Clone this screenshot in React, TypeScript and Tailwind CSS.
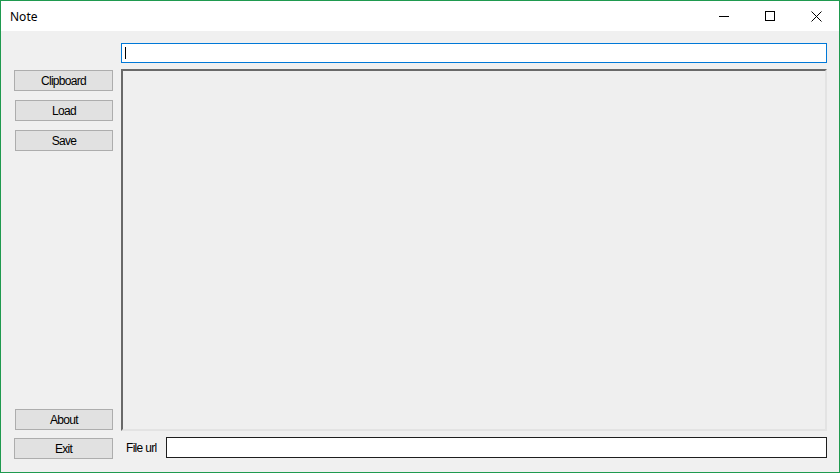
import React from 'react'

const ui = { fontFamily: '"Liberation Sans", Arial, sans-serif' }

function Btn({ label, className }: { label: string; className?: string }) {
  return (
    <button
      type="button"
      className={
        'h-[21px] bg-[#e1e1e1] border border-[#adadad] text-[12px] tracking-[-0.7px] text-black leading-none ' +
        (className ?? '')
      }
      style={ui}
    >
      {label}
    </button>
  )
}

export default function App() {
  return (
    <div className="w-[840px] h-[473px] border border-[#1f9a4f] flex flex-col bg-[#f0f0f0] overflow-hidden">
      {/* title bar */}
      <div className="h-[30px] bg-white flex items-center shrink-0">
        <span
          className="ml-[9px] mt-[1px] text-[12px] text-black"
          style={{ fontFamily: '"Noto Sans", "Open Sans", sans-serif' }}
        >
          Note
        </span>
        <div className="ml-auto flex h-full">
          <div className="w-[46px] h-full flex items-center justify-center">
            <svg width="10" height="10" viewBox="0 0 10 10">
              <path d="M0 5.5H10" stroke="#000" strokeWidth="1" />
            </svg>
          </div>
          <div className="w-[46px] h-full flex items-center justify-center">
            <svg width="10" height="10" viewBox="0 0 10 10">
              <rect x="0.5" y="0.5" width="9" height="9" fill="none" stroke="#000" strokeWidth="1" />
            </svg>
          </div>
          <div className="w-[46px] h-full flex items-center justify-center">
            <svg width="11" height="11" viewBox="0 0 11 11">
              <path d="M0.5 0.5L10.5 10.5M10.5 0.5L0.5 10.5" stroke="#000" strokeWidth="1" />
            </svg>
          </div>
        </div>
      </div>

      {/* body */}
      <div className="flex-1 flex">
        <div className="flex flex-col w-[112px] pl-[13px] pt-[39px] pb-[13px] shrink-0">
          <Btn label="Clipboard" className="w-[99px]" />
          <Btn label="Load" className="w-[98px] ml-px mt-[9px]" />
          <Btn label="Save" className="w-[98px] ml-px mt-[9px]" />
          <div className="flex-1" />
          <Btn label="About" className="w-[98px] ml-px" />
          <Btn label="Exit" className="w-[99px] mt-[8px]" />
        </div>

        <div className="flex-1 flex flex-col pl-[8px] pr-[12px] pt-[12px] pb-[14px]">
          <div className="h-[20px] border border-[#0078d7] bg-white flex items-center pl-[3px]">
            <div className="w-px h-[12px] bg-black" />
          </div>
          <div className="flex-1 mt-[6px] border-2 border-t-[#696969] border-l-[#696969] border-r-[#e3e3e3] border-b-[#e3e3e3] bg-[#efefef]" />
          <div className="h-[21px] mt-[6px] flex items-center">
            <span className="w-[45px] pl-[5px] text-[12px] tracking-[-0.7px] text-black" style={ui}>
              File url
            </span>
            <div className="flex-1 h-[21px] border border-[#1e1e1e] bg-white" />
          </div>
        </div>
      </div>
    </div>
  )
}
